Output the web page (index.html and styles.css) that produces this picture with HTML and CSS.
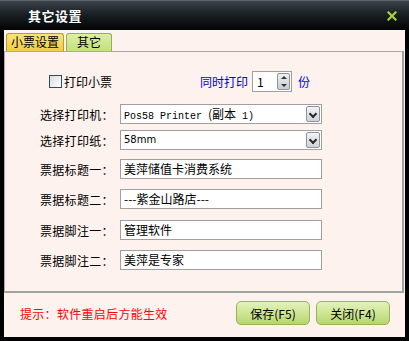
FILE: index.html
```html
<!DOCTYPE html>
<html lang="zh-CN">
<head>
  <meta charset="UTF-8">
  <title>其它设置</title>
  <link rel="stylesheet" href="styles.css">
</head>
<body>
  <div class="window">
    <div class="titlebar">
      <span class="title">其它设置</span>
      <svg class="close" width="10" height="10" viewBox="0 0 10 10">
        <path d="M1.5 1.5 L8.5 8.5 M8.5 1.5 L1.5 8.5" stroke="#a6d33c" stroke-width="2.2" stroke-linecap="square"/>
      </svg>
    </div>
    <div class="content">
      <div class="tabs">
        <div class="tab tab-active">小票设置</div>
        <div class="tab tab-other">其它</div>
      </div>
      <div class="panel">
        <div class="row row-print">
          <label class="check"><span class="box"></span>打印小票</label>
          <span class="blue">同时打印</span>
          <div class="spin">
            <span>1</span>
            <div class="spin-btn">
              <span class="up"></span>
              <span class="down"></span>
            </div>
          </div>
          <span class="blue unit">份</span>
        </div>
        <div class="row row-printer">
          <span class="label">选择打印机：</span>
          <div class="field select mono">Pos58 Printer <span class="cjk">(副本</span> 1)<span class="arrow"></span></div>
        </div>
        <div class="row row-paper">
          <span class="label">选择打印纸：</span>
          <div class="field select sans">58mm<span class="arrow"></span></div>
        </div>
        <div class="row row-t1">
          <span class="label">票据标题一：</span>
          <div class="field">美萍储值卡消费系统</div>
        </div>
        <div class="row row-t2">
          <span class="label">票据标题二：</span>
          <div class="field">---紫金山路店---</div>
        </div>
        <div class="row row-f1">
          <span class="label">票据脚注一：</span>
          <div class="field">管理软件</div>
        </div>
        <div class="row row-f2">
          <span class="label">票据脚注二：</span>
          <div class="field">美萍是专家</div>
        </div>
      </div>
      <div class="footer">
        <span class="hint">提示：软件重启后方能生效</span>
        <div class="buttons">
          <button class="btn">保存(F5)</button>
          <button class="btn">关闭(F4)</button>
        </div>
      </div>
    </div>
  </div>
</body>
</html>
```

FILE: styles.css
```css
body {
  margin: 0;
  font-family: "Noto Sans CJK SC", sans-serif;
  font-size: 12px;
  color: #000;
  background: #000;
}
.window {
  width: 409px;
  height: 341px;
  background: #000;
  display: flex;
  flex-direction: column;
}
.titlebar {
  height: 30px;
  box-sizing: border-box;
  border-top: 1px solid #5d666c;
  background: linear-gradient(#3b444a, #1a2024 45%, #020405);
  display: flex;
  align-items: center;
  justify-content: space-between;
  padding: 0 12px 0 28px;
}
.title {
  color: #fff;
  font-weight: bold;
  font-size: 13px;
  letter-spacing: 0.5px;
}
.close {
  display: block;
}
.content {
  margin: 0 4px 4px;
  flex: 1;
  background: #fdf2ee;
  display: flex;
  flex-direction: column;
}
.tabs {
  display: flex;
  gap: 2px;
  padding: 3px 0 0 2px;
}
.tab {
  height: 18px;
  box-sizing: border-box;
  line-height: 16px;
  border: 1px solid;
  border-bottom: none;
  border-radius: 3px 3px 0 0;
  text-align: center;
}
.tab-active {
  width: 58px;
  background: linear-gradient(#fbe27a, #f0cc45);
  border-color: #c09a2a;
}
.tab-other {
  width: 46px;
  background: linear-gradient(#dcefa6, #c3e07c);
  border-color: #8fb44c;
}
.panel {
  height: 242px;
  box-sizing: border-box;
  margin: 0 1px 0 0;
  border: 1px solid #a9a9a9;
  border-right: 2px solid #9ea39e;
  border-bottom: 2px solid #9ea39e;
  background: #fdf2ee;
  display: flex;
  flex-direction: column;
}
.row {
  display: flex;
  align-items: center;
  padding-left: 35px;
}
.row-print {
  margin-top: 19px;
  height: 21px;
  padding-left: 44px;
}
.row-printer { margin-top: 12px; }
.row-paper { margin-top: 6px; }
.row-t1 { margin-top: 9px; }
.row-t2 { margin-top: 10px; }
.row-f1 { margin-top: 11px; }
.row-f2 { margin-top: 10px; }
.check {
  display: flex;
  align-items: center;
  gap: 2px;
  width: 151px;
}
.box {
  width: 11px;
  height: 11px;
  border: 1px solid #1c5180;
  background: linear-gradient(135deg, #dcdcd8, #fff);
}
.blue {
  color: #0000ee;
}
.spin {
  margin-left: 4px;
  width: 40px;
  height: 21px;
  box-sizing: border-box;
  border: 1px solid #a0a0a0;
  background: #fff;
  display: flex;
  align-items: center;
  justify-content: space-between;
  padding: 0 1px 0 4px;
}
.spin-btn {
  width: 13px;
  height: 17px;
  box-sizing: border-box;
  border: 1px solid #8e939b;
  border-radius: 2px;
  background: linear-gradient(#eef0f4, #c9ccd4);
  display: flex;
  flex-direction: column;
  align-items: center;
  justify-content: space-around;
}
.up, .down {
  width: 0;
  height: 0;
  border-left: 3px solid transparent;
  border-right: 3px solid transparent;
}
.up { border-bottom: 3px solid #333; }
.down { border-top: 3px solid #333; }
.unit {
  margin-left: 6px;
}
.label {
  width: 80px;
  letter-spacing: 0.3px;
}
.field {
  width: 202px;
  height: 20px;
  box-sizing: border-box;
  border: 1px solid #a0a0a0;
  background: #fff;
  padding: 0 3px;
  line-height: 18px;
  position: relative;
  white-space: nowrap;
}
.mono {
  font-family: "Liberation Mono", monospace;
  font-size: 10px;
}
.cjk {
  font-family: "Noto Sans CJK SC", sans-serif;
  font-size: 12px;
}
.sans {
  font-family: "DejaVu Sans", sans-serif;
  font-size: 10px;
}
.arrow {
  position: absolute;
  right: 1px;
  top: 1px;
  width: 14px;
  height: 16px;
  box-sizing: border-box;
  border: 1px solid #8e939b;
  border-radius: 2px;
  background: linear-gradient(#f2f3f7, #cfd2da);
}
.arrow::after {
  content: "";
  position: absolute;
  left: 3px;
  top: 4px;
  width: 4px;
  height: 4px;
  border-right: 2px solid #2a2a2a;
  border-bottom: 2px solid #2a2a2a;
  transform: rotate(45deg);
}
.footer {
  flex: 1;
  display: flex;
  align-items: center;
  justify-content: space-between;
  padding: 0 15px 4px 16px;
}
.hint {
  color: #ff0000;
  letter-spacing: 0.3px;
}
.buttons {
  display: flex;
  gap: 6px;
}
.btn {
  width: 74px;
  height: 24px;
  border: 1px solid #93b654;
  border-radius: 5px;
  background: linear-gradient(#e4f1bb, #c9e38d 60%, #b5d46e);
  font-family: "Noto Sans CJK SC", sans-serif;
  font-size: 12px;
  color: #000;
  padding: 0;
}
```
